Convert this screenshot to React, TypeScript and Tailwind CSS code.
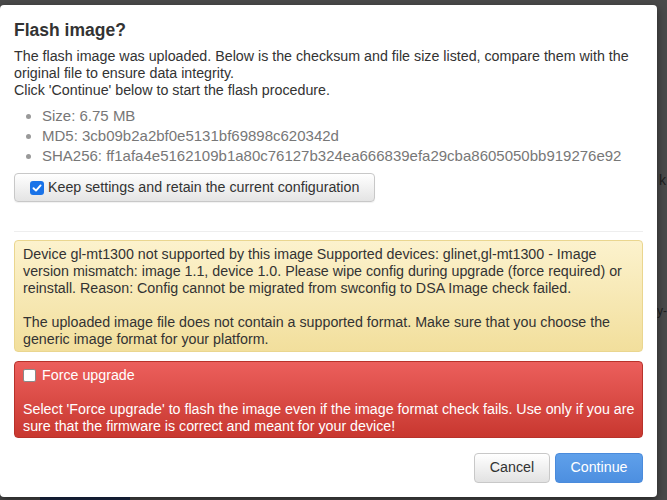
import React from 'react'

const warningLines = [
  'Device gl-mt1300 not supported by this image Supported devices: glinet,gl-mt1300 - Image',
  'version mismatch: image 1.1, device 1.0. Please wipe config during upgrade (force required) or',
  'reinstall. Reason: Config cannot be migrated from swconfig to DSA Image check failed.',
]

const checksums = [
  'Size: 6.75 MB',
  'MD5: 3cb09b2a2bf0e5131bf69898c620342d',
  'SHA256: ff1afa4e5162109b1a80c76127b324ea666839efa29cba8605050bb919276e92',
]

function CheckedBox() {
  return (
    <span className="flex h-[14px] w-[14px] items-center justify-center rounded-[3px] bg-[#1a73e8]">
      <svg width="10" height="10" viewBox="0 0 10 10" fill="none">
        <path d="M1.5 5.2 4 7.6 8.6 2.4" stroke="white" strokeWidth="1.9" strokeLinecap="round" strokeLinejoin="round" />
      </svg>
    </span>
  )
}

export default function App() {
  return (
    <div className="relative h-[500px] w-[667px] overflow-hidden bg-[#4a4a4a] font-['Liberation_Sans',Arial,sans-serif]">
      {/* page behind the dimmed overlay */}
      <span className="absolute left-[659px] top-[170px] text-[14px] text-[#1e1e1e]">k</span>
      <span className="absolute left-[657px] top-[302px] text-[12px] text-[#1e1e1e]">y-</span>
      <div className="absolute left-[40px] top-[496px] h-[10px] w-[90px] bg-[#1c2a4a]" />

      <div className="relative mt-[5px] flex h-[492px] w-[657px] flex-col rounded-[4px] bg-white px-[14px] pb-[14px] pt-[14px] text-[#333] shadow-[0_3px_9px_rgba(0,0,0,0.5)]">
        <h2 className="text-[17.5px] font-bold leading-[22px] text-[#333]">Flash image?</h2>

        <p className="mt-[7px] text-[14.25px] leading-[17px] text-[#333]">
          The flash image was uploaded. Below is the checksum and file size listed, compare them with the
          <br />
          original file to ensure data integrity.
          <br />
          Click 'Continue' below to start the flash procedure.
        </p>

        <ul className="mt-[7px] list-disc pl-[28px] text-[15px] leading-[20px] text-[#777] marker:text-[#999]">
          {checksums.map((c) => (
            <li key={c} className="whitespace-nowrap">{c}</li>
          ))}
        </ul>

        <label className="mt-[7px] flex h-[29px] w-[361px] items-center gap-[4px] rounded-[4px] border border-[#c8c8c8] bg-gradient-to-b from-white to-[#e4e4e4] pl-[15px] text-[14.25px] text-[#333] shadow-[0_1px_1px_rgba(0,0,0,0.06)]">
          <CheckedBox />
          <span>Keep settings and retain the current configuration</span>
        </label>

        <hr className="mt-[29px] border-t border-[#eeeeee]" />

        <div className="mt-[8px] rounded-[4px] border border-[#ead68f] bg-gradient-to-b from-[#fcf2cd] to-[#f2df9c] px-[8px] pb-[3px] pt-[5px] text-[14.25px] leading-[17px] text-[#333]">
          {warningLines.map((l) => (
            <div key={l} className="whitespace-nowrap">{l}</div>
          ))}
          <div className="h-[17px]" />
          <div className="whitespace-nowrap">The uploaded image file does not contain a supported format. Make sure that you choose the</div>
          <div className="whitespace-nowrap">generic image format for your platform.</div>
        </div>

        <div className="mt-[9px] rounded-[4px] border border-[#b8322b] bg-gradient-to-b from-[#ec5f5c] to-[#c8372f] px-[8px] pb-[2px] pt-[5px] text-[14.25px] leading-[17px] text-white">
          <label className="flex items-center gap-[6px]">
            <span className="h-[13px] w-[13px] rounded-[2px] border border-[#8a8a8a] bg-white" />
            <span>Force upgrade</span>
          </label>
          <div className="h-[17px]" />
          <div className="whitespace-nowrap">Select 'Force upgrade' to flash the image even if the image format check fails. Use only if you are</div>
          <div className="whitespace-nowrap">sure that the firmware is correct and meant for your device!</div>
        </div>

        <div className="mt-[15px] flex justify-end gap-[5px]">
          <button className="h-[30px] w-[76px] rounded-[4px] border border-[#c8c8c8] bg-gradient-to-b from-white to-[#e2e2e2] text-[14.25px] text-[#333]">
            Cancel
          </button>
          <button className="h-[30px] w-[88px] rounded-[4px] border border-[#4a8bdc] bg-gradient-to-b from-[#5fa0ea] to-[#4d8fe0] text-[14.25px] text-white">
            Continue
          </button>
        </div>
      </div>
    </div>
  )
}
